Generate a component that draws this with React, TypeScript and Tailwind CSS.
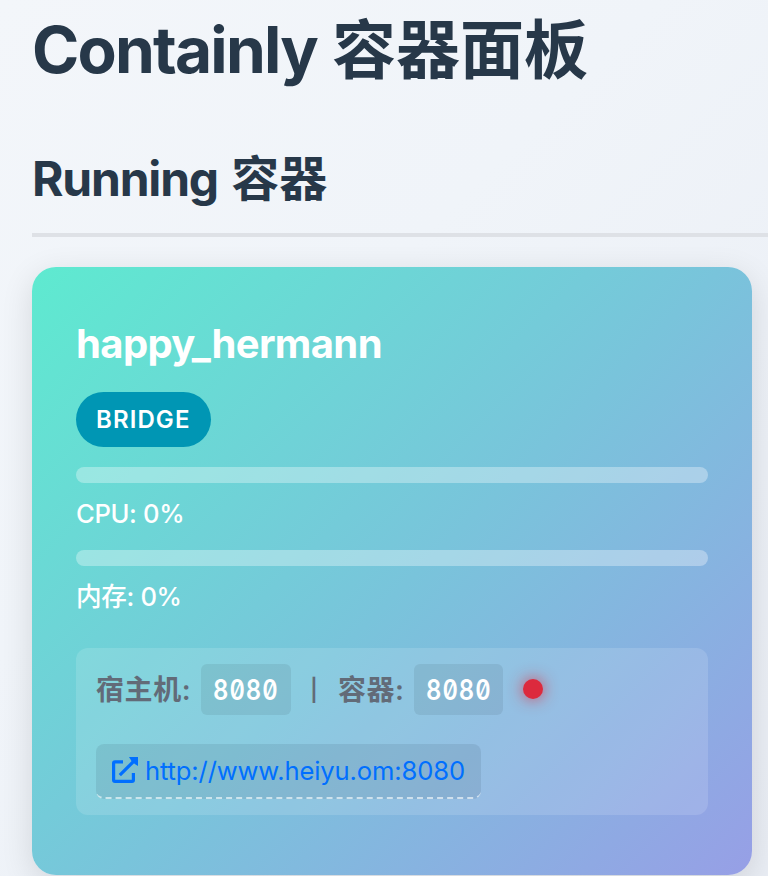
function Meter({ label, className }: { label: string; className: string }) {
  return (
    <div className={className}>
      <div className="h-4 rounded-lg bg-white/33" />
      <div className="mt-3 h-[39px] text-[25.6px] leading-[38px] font-medium tracking-[-0.34px] text-white">{label}</div>
    </div>
  );
}

function Port({ value, className }: { value: string; className: string }) {
  return (
    <code
      className={`flex h-[51px] items-center rounded-md bg-black/7 pl-3 font-['Inter'] text-[28px] font-semibold text-white [font-feature-settings:'zero','tnum'] ${className}`}
    >
      <span className="origin-left scale-x-[0.85] tracking-[1.2px]">{value}</span>
    </code>
  );
}

export default function App() {
  return (
    <div className="h-[876px] overflow-hidden bg-linear-135/srgb from-[#f3f6fa] from-0% via-[#f0f4f9] via-40% to-[#e9edf4] pl-8 font-['Inter','Noto_Sans_CJK_SC',sans-serif] text-[#273849]">
      <h1 className="h-[102px] w-max text-[64px] leading-[100px] font-bold whitespace-nowrap">
        <span className="tracking-[-1.8px]">Containly</span> 容器面板
      </h1>
      <div className="mt-7 h-[107px] border-b-4 border-[#dee1e6]">
        <h2 className="text-[48px] leading-[98px] font-[650] whitespace-nowrap">
          <span className="tracking-[-1.2px]">Running</span>
          <span className="ml-[2px]"> 容器</span>
        </h2>
      </div>
      <section className="mt-[30px] h-[608px] w-[720px] rounded-3xl bg-linear-135/srgb from-[#5eead0] via-[#79c4db] via-52% to-[#979fe6] px-11 pt-12 shadow-[0_8px_32px_rgba(0,0,0,0.12)]">
        <h3 className="h-[60px] text-[40px] leading-[58px] font-bold text-white">
          <span className="tracking-[-0.62px]">happy_hermann</span>
        </h3>
        <div className="mt-[17px] flex h-[55px] w-[135px] items-center rounded-full bg-[#0096b4] pl-5 text-[24px] font-[580] text-white">
          <span className="tracking-[1.1px]">BRIDGE</span>
        </div>
        <Meter label="CPU: 0%" className="mt-5" />
        <Meter label="内存: 0%" className="mt-4" />
        <div className="mt-[31px] h-[167px] rounded-xl bg-white/13 px-5 pt-4">
          <div className="flex h-[51px] items-center text-[28px] font-semibold text-[#626b78]">
            <span className="w-[105px] tracking-[0.6px]">宿主机:</span>
            <Port value="8080" className="w-[90px]" />
            <span className="ml-[19px] w-[28px] pt-0.5 text-[22px] font-semibold">|</span>
            <span className="w-[76px] tracking-[0.5px]">容器:</span>
            <Port value="8080" className="w-[89px]" />
            <span className="mb-px ml-5 size-5 rounded-full bg-[#dc2a3d] shadow-[0_0_16px_rgba(220,53,69,0.9)]" />
          </div>
          <a className="mt-[29px] flex h-[55px] w-[385px] items-center rounded-lg border-b-2 border-dashed border-white/60 bg-[#203040]/10 pl-4 text-[25.6px] text-[#006fff]">
            <svg viewBox="0 0 26 26" className="mb-0.5 size-[26px]" fill="none" stroke="currentColor" strokeWidth="3.2">
              <path d="M11 4.8H3Q1.6 4.8 1.6 6.2V23Q1.6 24.4 3 24.4H20Q21.4 24.4 21.4 23V16" />
              <path d="M7.8 18.2 21.5 4.5" />
              <path d="M17 0H26V9L22.8 7L19 3.2Z" fill="currentColor" stroke="none" />
            </svg>
            <span className="ml-[7px] pt-0.5 tracking-[-0.14px]">http://www.heiyu.om:8080</span>
          </a>
        </div>
      </section>
    </div>
  );
}
